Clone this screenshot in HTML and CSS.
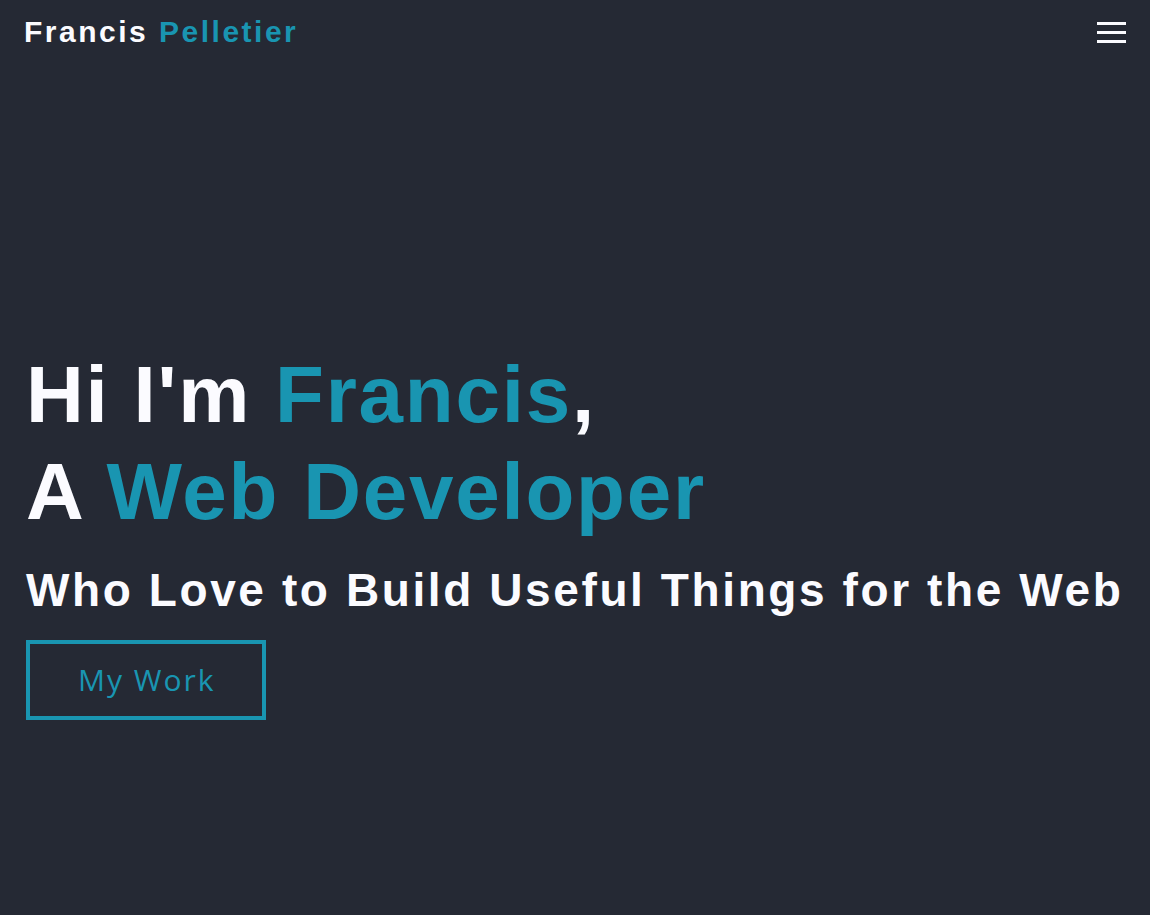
FILE: index.html
```html
<!DOCTYPE html>
<html lang="en">
<head>
<meta charset="utf-8">
<title>Francis Pelletier</title>
<link rel="stylesheet" href="styles.css">
</head>
<body>
<header class="topbar">
  <a class="brand" href="#">Francis <span class="accent">Pelletier</span></a>
  <button class="menu-btn" aria-label="Menu">
    <span class="bar"></span><span class="bar"></span><span class="bar"></span>
  </button>
</header>
<main class="hero">
  <h1 class="hero-title">Hi I'm <span class="accent">Francis</span>,<br>A <span class="accent">Web Developer</span></h1>
  <h2 class="hero-sub">Who Love to Build Useful Things for the Web</h2>
  <a class="btn-outline" href="#">My Work</a>
</main>
</body>
</html>
```
FILE: styles.css
```css
* { box-sizing: border-box; }
html, body { margin: 0; padding: 0; }
body {
  background: #252934;
  color: #fbfbff;
  font-family: "Liberation Sans", Arial, sans-serif;
  min-height: 100vh;
}
.accent { color: #1995b1; }
.topbar {
  height: 64px;
  padding: 0 24px;
  display: flex;
  align-items: center;
  justify-content: space-between;
}
.brand {
  color: #fbfbff;
  text-decoration: none;
  font-weight: 700;
  font-size: 30px;
  letter-spacing: 2.5px;
}
.menu-btn {
  background: none;
  border: 0;
  padding: 0;
  width: 29px;
  display: flex;
  flex-direction: column;
  gap: 6px;
  cursor: pointer;
}
.bar {
  display: block;
  height: 3px;
  width: 29px;
  background: #fbfbff;
}
.hero {
  padding: 282px 26px 0;
}
.hero-title {
  margin: 0;
  font-size: 80px;
  line-height: 97px;
  font-weight: 700;
  letter-spacing: 1.75px;
}
.hero-sub {
  margin: 22px 0 22px;
  font-size: 46px;
  line-height: 56px;
  font-weight: 700;
  letter-spacing: 2.6px;
}
.btn-outline {
  display: inline-block;
  border: 4px solid #1995b1;
  color: #1995b1;
  text-decoration: none;
  font-family: "Open Sans", sans-serif;
  font-size: 30px;
  letter-spacing: 2px;
  padding: 14px 46px 15px 48px;
  line-height: 43px;
}
```
